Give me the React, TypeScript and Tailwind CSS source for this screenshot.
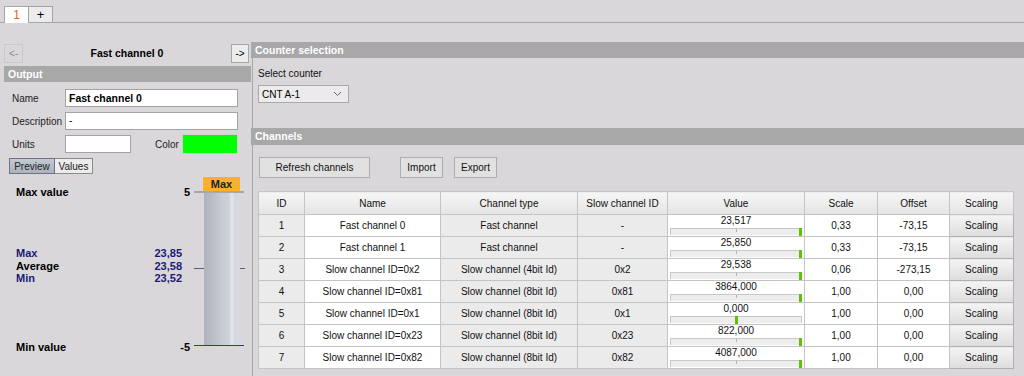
import React from "react";

type Row = {
  id: number;
  name: string;
  type: string;
  slowId: string;
  value: string;
  pos: number; // 0..1 marker position in the value bar
  scale: string;
  offset: string;
};

const ROWS: Row[] = [
  { id: 1, name: "Fast channel 0", type: "Fast channel", slowId: "-", value: "23,517", pos: 1, scale: "0,33", offset: "-73,15" },
  { id: 2, name: "Fast channel 1", type: "Fast channel", slowId: "-", value: "25,850", pos: 1, scale: "0,33", offset: "-73,15" },
  { id: 3, name: "Slow channel ID=0x2", type: "Slow channel (4bit Id)", slowId: "0x2", value: "29,538", pos: 1, scale: "0,06", offset: "-273,15" },
  { id: 4, name: "Slow channel ID=0x81", type: "Slow channel (8bit Id)", slowId: "0x81", value: "3864,000", pos: 1, scale: "1,00", offset: "0,00" },
  { id: 5, name: "Slow channel ID=0x1", type: "Slow channel (8bit Id)", slowId: "0x1", value: "0,000", pos: 0.5, scale: "1,00", offset: "0,00" },
  { id: 6, name: "Slow channel ID=0x23", type: "Slow channel (8bit Id)", slowId: "0x23", value: "822,000", pos: 1, scale: "1,00", offset: "0,00" },
  { id: 7, name: "Slow channel ID=0x82", type: "Slow channel (8bit Id)", slowId: "0x82", value: "4087,000", pos: 1, scale: "1,00", offset: "0,00" },
];

const sectionBar =
  "h-[16px] bg-[#a8a8a8] pl-[4px] text-[10.5px] font-bold leading-[16px] text-white";
const inputCls =
  "h-[18px] border border-[#a3a3a3] bg-white px-[3px] leading-[16px] text-black";
const btnCls =
  "h-[21px] border border-[#adadad] bg-[#e1e1e1] text-[10px] text-[#111]";
const th =
  "h-[23px] border border-[#c4c4c4] bg-gradient-to-b from-[#f6f6f6] to-[#e4e4e4] text-center font-normal";
const grayTd = "h-[22px] border border-[#c4c4c4] bg-[#ebebeb] text-center";
const whiteTd = "h-[22px] border border-[#c4c4c4] bg-white text-center";

function ValueBar({ value, pos }: { value: string; pos: number }) {
  return (
    <div className="flex h-[21px] flex-col px-[2px]">
      <div className="h-[12px] text-center leading-[12px]">{value}</div>
      <div className="relative mt-[1px] h-[7px] border border-b-0 border-[#c8c8c8] bg-[#ededed]">
        <div className="absolute left-1/2 top-0 h-[3px] w-px bg-[#b5b5b5]" />
        <div
          className="absolute top-[-1px] h-[8px] w-[3px] bg-[#5fc400]"
          style={{ left: pos >= 1 ? "calc(100% - 2px)" : `calc(${pos * 100}% - 1px)` }}
        />
      </div>
    </div>
  );
}

function Gauge() {
  return (
    <div className="relative mt-[3px] h-[200px] text-[11px]">
      <div className="absolute left-[12px] top-[7px] font-bold">Max value</div>
      <div className="absolute left-[176px] top-[7px] w-[10px] text-right font-bold">5</div>

      <div className="absolute left-[12px] top-[70px] w-[166px] leading-[12.5px] font-bold">
        <div className="flex justify-between text-[#1b1b78]">
          <span>Max</span>
          <span>23,85</span>
        </div>
        <div className="flex justify-between">
          <span>Average</span>
          <span className="text-[#1b1b78]">23,58</span>
        </div>
        <div className="flex justify-between text-[#1b1b78]">
          <span>Min</span>
          <span>23,52</span>
        </div>
      </div>

      <div className="absolute left-[12px] top-[162px] font-bold">Min value</div>
      <div className="absolute left-[170px] top-[162px] w-[16px] text-right font-bold">-5</div>

      {/* bar */}
      <div className="absolute left-[199px] top-0 h-[14px] w-[37px] bg-[#fdb02d] text-center font-bold leading-[14px] text-[#222]">
        Max
      </div>
      <div className="absolute left-[200px] top-[14px] h-[154px] w-[35px] bg-gradient-to-r from-[#adb2bb] via-[#c7cbd3] to-[#d8dbe1]" />
      <div className="absolute left-[226px] top-[14px] h-[154px] w-[4px] bg-[#dfe2e7]" />
      <div className="absolute left-[190px] top-[14px] h-[2px] w-[50px] bg-[#a3a8b3]" />
      <div className="absolute left-[190px] top-[91px] h-px w-[10px] bg-[#5a5f78]" />
      <div className="absolute left-[236px] top-[91px] h-px w-[5px] bg-[#5a5f78]" />
      <div className="absolute left-[190px] top-[168px] h-px w-[50px] bg-[#2f3b8a]" />
    </div>
  );
}

export default function App() {
  return (
    <div
      className="flex h-[376px] w-[1024px] flex-col overflow-hidden bg-[#d9d7d9] text-[10px] text-black"
      style={{ fontFamily: '"Liberation Sans", Arial, sans-serif' }}
    >
      {/* tabs */}
      <div className="flex h-[23px] shrink-0 items-end border-b border-[#a5a5a5] pl-[4px]">
        <div className="-mb-px flex h-[17px] w-[25px] items-center justify-center border border-b-0 border-[#a5a5a5] bg-white text-[12px] text-[#e2631c]">
          1
        </div>
        <div className="flex h-[16px] w-[24px] items-center justify-center border border-b-0 border-l-0 border-[#a5a5a5] bg-[#ebebeb] text-[13px]">
          +
        </div>
      </div>

      <div className="flex min-h-0 flex-1">
        {/* left panel */}
        <div className="w-[251px] shrink-0 pl-[4px] pt-[20px]">
          <div className="flex h-[21px] items-center">
            <div className="flex h-[19px] w-[19px] items-center justify-center border border-[#c9c9c9] text-[#8e8e8e]">
              &lt;-
            </div>
            <div className="flex-1 text-center text-[10.5px] font-bold">Fast channel 0</div>
            <div className="mr-[2px] flex h-[19px] w-[18px] items-center justify-center border border-[#a8a8a8] bg-[#ececec]">
              -&gt;
            </div>
          </div>
          <div className={`mt-[2px] ${sectionBar} h-[14px] leading-[14px]`}>Output</div>

          <div className="mt-[7px] flex flex-col gap-[5px] pl-[8px] pr-[13px]">
            <div className="flex items-center">
              <span className="w-[53px] text-[#222]">Name</span>
              <div className={`${inputCls} flex-1 text-[10.5px] font-bold`}>Fast channel 0</div>
            </div>
            <div className="flex items-center">
              <span className="w-[53px] text-[#222]">Description</span>
              <div className={`${inputCls} flex-1`}>-</div>
            </div>
            <div className="flex h-[18px] items-center">
              <span className="w-[53px] text-[#222]">Units</span>
              <div className={`${inputCls} w-[66px]`} />
              <span className="ml-[24px] w-[27px] text-[#222]">Color</span>
              <div className="h-[20px] flex-1 border border-[#d0d0d0] bg-[#00ff00]" />
            </div>
          </div>

          <div className="ml-[5px] mt-[5px] flex h-[16px]">
            <div className="flex w-[46px] items-center justify-center border border-[#6e7380] bg-gradient-to-b from-[#c3c9d4] to-[#aab2c0] text-[#222]">
              Preview
            </div>
            <div className="flex w-[38px] items-center justify-center border border-l-0 border-[#8a8a8a] bg-[#ececec] text-[#222]">
              Values
            </div>
          </div>

          <Gauge />
        </div>

        {/* right panel */}
        <div className="flex min-w-0 flex-1 flex-col pt-[19px]">
          <div className={sectionBar}>Counter selection</div>
          <div className="ml-[1px] flex flex-1 flex-col border-l border-[#a6a6a6]">
            <div className="h-[70px] pl-[5px] pt-[8px]">
              <div className="text-[#111]">Select counter</div>
              <div className="mt-[4px] flex h-[18px] w-[91px] items-center justify-between border border-[#a9a9a9] bg-[#ebebeb] pl-[3px] pr-[6px]">
                <span>CNT A-1</span>
                <svg width="9" height="6" viewBox="0 0 9 6">
                  <path d="M1 1 L4.5 4.5 L8 1" fill="none" stroke="#666" strokeWidth="1" />
                </svg>
              </div>
            </div>
            <div className={`-ml-[2px] ${sectionBar} h-[17px] leading-[17px]`}>Channels</div>

            <div className="flex gap-[30px] pl-[6px] pt-[12px]">
              <button className={`${btnCls} w-[111px]`}>Refresh channels</button>
              <div className="flex gap-[11px]">
                <button className={`${btnCls} w-[43px]`}>Import</button>
                <button className={`${btnCls} w-[43px]`}>Export</button>
              </div>
            </div>

            <table className="ml-[5px] mt-[13px] w-[755px] table-fixed border-collapse text-[10px] text-[#111]">
              <colgroup>
                <col className="w-[46px]" />
                <col className="w-[136px]" />
                <col className="w-[137px]" />
                <col className="w-[90px]" />
                <col className="w-[137px]" />
                <col className="w-[73px]" />
                <col className="w-[72px]" />
                <col className="w-[64px]" />
              </colgroup>
              <thead>
                <tr>
                  <th className={th}>ID</th>
                  <th className={th}>Name</th>
                  <th className={th}>Channel type</th>
                  <th className={th}>Slow channel ID</th>
                  <th className={th}>Value</th>
                  <th className={th}>Scale</th>
                  <th className={th}>Offset</th>
                  <th className={`${th} border-[#b0b0b0]`}>Scaling</th>
                </tr>
              </thead>
              <tbody>
                {ROWS.map((r) => (
                  <tr key={r.id}>
                    <td className={grayTd}>{r.id}</td>
                    <td className={whiteTd}>{r.name}</td>
                    <td className={grayTd}>{r.type}</td>
                    <td className={grayTd}>{r.slowId}</td>
                    <td className="h-[22px] border border-[#c4c4c4] bg-white p-0">
                      <ValueBar value={r.value} pos={r.pos} />
                    </td>
                    <td className={whiteTd}>{r.scale}</td>
                    <td className={whiteTd}>{r.offset}</td>
                    <td className="h-[22px] border border-[#b0b0b0] bg-gradient-to-b from-[#f4f4f4] to-[#dddddd] text-center">
                      Scaling
                    </td>
                  </tr>
                ))}
              </tbody>
            </table>
          </div>
        </div>
      </div>
    </div>
  );
}
